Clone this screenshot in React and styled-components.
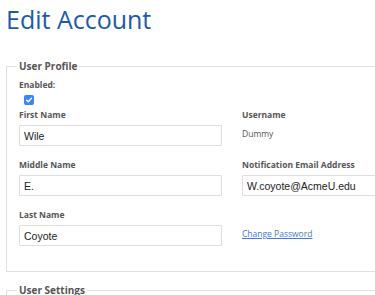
import styled, { createGlobalStyle } from 'styled-components';

const GlobalStyle = createGlobalStyle`
  html, body {
    margin: 0;
    padding: 0;
    background: #ffffff;
    overflow: hidden;
  }
  body {
    font-family: "Open Sans", "Liberation Sans", sans-serif;
  }
`;

const Page = styled.div`
  width: 520px;
  padding: 3px 0 0 6px;
`;

const Title = styled.h1`
  margin: 0 0 24px 0;
  font-size: 25px;
  font-weight: 400;
  line-height: 33px;
  color: #1d5aa6;
`;

const Fieldset = styled.fieldset`
  margin: 0 0 12px 0;
  padding: 7px 12px 25px 12px;
  border: 1px solid #e0e0e0;
  min-width: 0;
`;

const Legend = styled.legend`
  padding: 0 2px;
  margin-left: -2px;
  font-size: 10px;
  font-weight: 700;
  line-height: 12px;
  color: #555;
`;

const Label = styled.div`
  font-size: 8.5px;
  font-weight: 700;
  line-height: 12px;
  color: #555;
  margin-bottom: 4px;
`;

const Check = styled.span`
  display: block;
  width: 10px;
  height: 10px;
  margin: 4px 0 4px 5px;
  border-radius: 2px;
  background: #3b86f0;
  svg {
    display: block;
  }
`;

const Grid = styled.div`
  display: grid;
  grid-template-columns: 203px 203px;
  column-gap: 20px;
  row-gap: 13px;
`;

const Field = styled.div`
  display: flex;
  flex-direction: column;
`;

const Input = styled.input`
  box-sizing: border-box;
  width: 203px;
  height: 21px;
  padding: 0 4px;
  border: 1px solid #dedede;
  border-radius: 1px;
  font-family: "Liberation Sans", Arial, sans-serif;
  font-size: 10.5px;
  color: #222;
  background: #fff;
  outline: none;
`;

const Value = styled.div`
  margin-top: 3px;
  font-size: 8.5px;
  line-height: 12px;
  color: #555;
`;

const LinkText = styled.a`
  margin-top: 19px;
  font-size: 8.5px;
  line-height: 12px;
  color: #3f78d6;
  text-decoration: underline;
`;

export default function App() {
  return (
    <>
      <GlobalStyle />
      <Page>
        <Title>Edit Account</Title>
        <Fieldset>
          <Legend>User Profile</Legend>
          <Label>Enabled:</Label>
          <Check>
            <svg width="10" height="10" viewBox="0 0 10 10">
              <path d="M2.6 5.2 L4.3 6.8 L7.5 3.3" fill="none" stroke="#fff" strokeWidth="1.4" strokeLinecap="round" strokeLinejoin="round" />
            </svg>
          </Check>
          <Grid>
            <Field>
              <Label>First Name</Label>
              <Input defaultValue="Wile" />
            </Field>
            <Field>
              <Label>Username</Label>
              <Value>Dummy</Value>
            </Field>
            <Field>
              <Label>Middle Name</Label>
              <Input defaultValue="E." />
            </Field>
            <Field>
              <Label>Notification Email Address</Label>
              <Input defaultValue="W.coyote@AcmeU.edu" />
            </Field>
            <Field>
              <Label>Last Name</Label>
              <Input defaultValue="Coyote" />
            </Field>
            <Field>
              <LinkText href="#">Change Password</LinkText>
            </Field>
          </Grid>
        </Fieldset>
        <Fieldset>
          <Legend>User Settings</Legend>
          <Label>Default settings</Label>
        </Fieldset>
      </Page>
    </>
  );
}
